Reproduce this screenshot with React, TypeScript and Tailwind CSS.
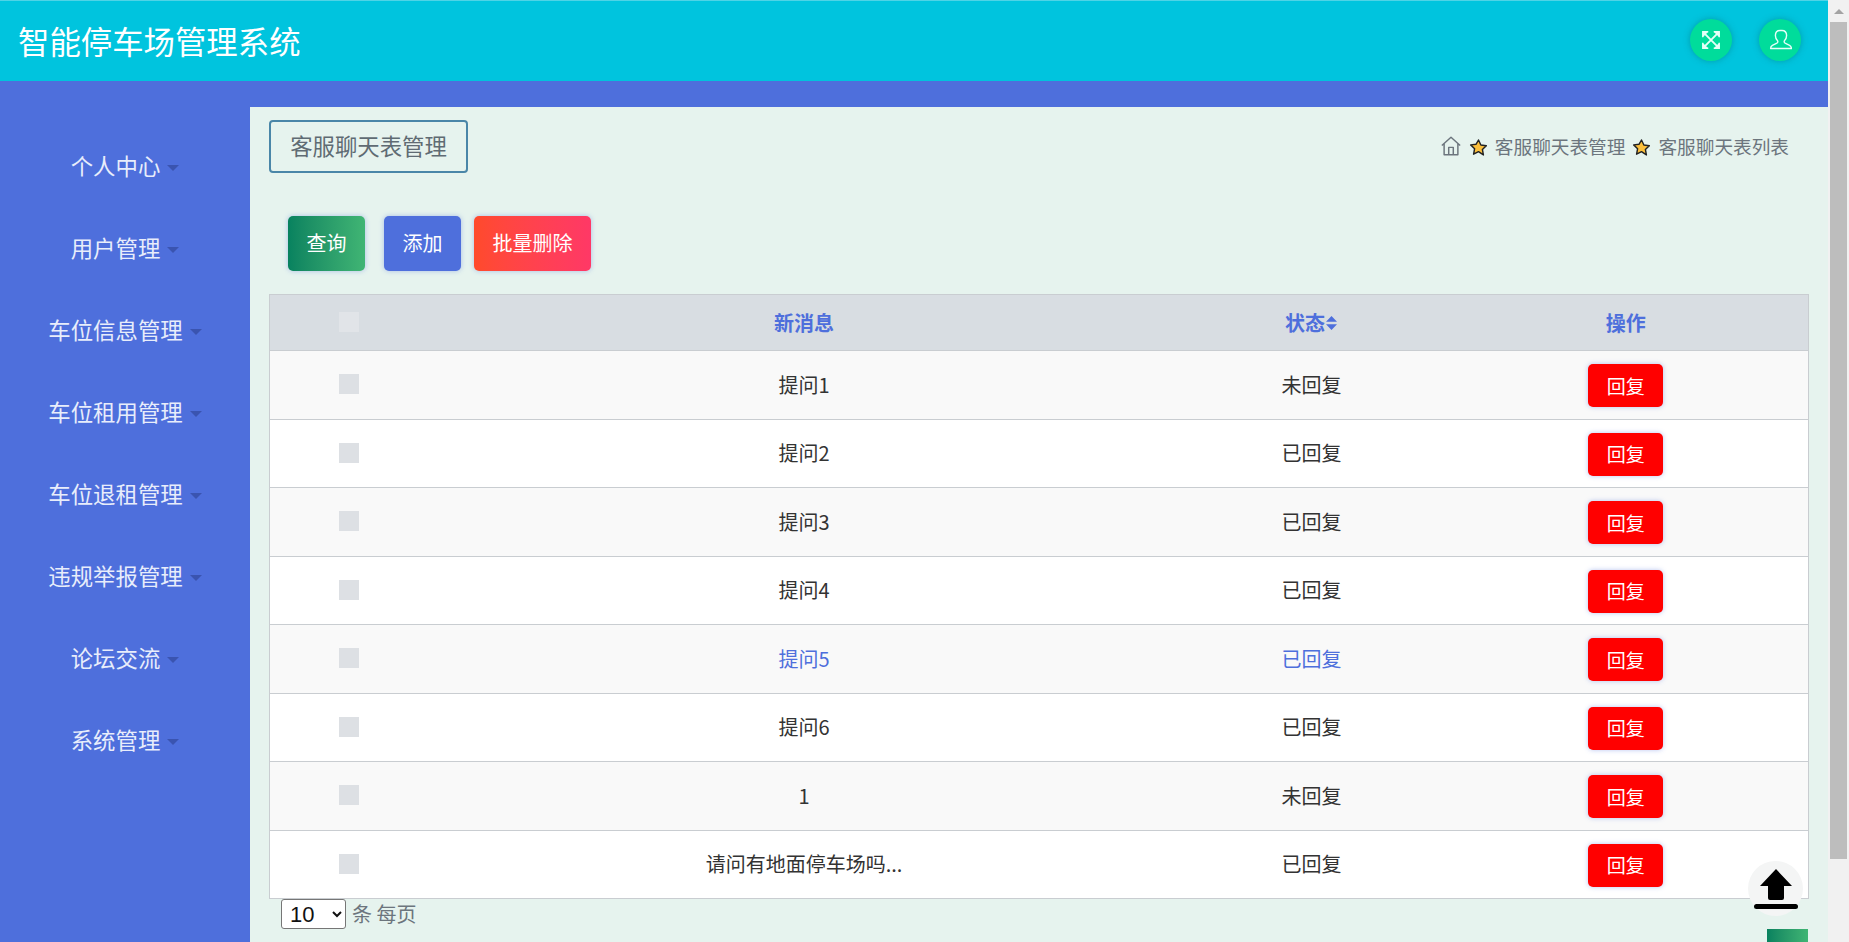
import React from 'react';

const FONT = '"Noto Sans CJK SC", "Liberation Sans", sans-serif';

const MENUS = ['个人中心', '用户管理', '车位信息管理', '车位租用管理', '车位退租管理', '违规举报管理', '论坛交流', '系统管理'];

const ROWS = [
  { id: 1, msg: '提问1', status: '未回复' },
  { id: 2, msg: '提问2', status: '已回复' },
  { id: 3, msg: '提问3', status: '已回复' },
  { id: 4, msg: '提问4', status: '已回复' },
  { id: 5, msg: '提问5', status: '已回复', hover: true },
  { id: 6, msg: '提问6', status: '已回复' },
  { id: 7, msg: '1', status: '未回复' },
  { id: 8, msg: '请问有地面停车场吗...', status: '已回复' },
];

const Star = () => (
  <svg width="19" height="19" viewBox="0 0 24 24" className="shrink-0 mt-[3px]">
    <path d="M12 2.500l3 6.300 6.900.9-5 4.800 1.300 6.900L12 17.200l-6.200 3.200 1.300-6.900-5-4.800 6.900-.9z" fill="#fbbf3c" stroke="#222" strokeWidth="1.800" strokeLinejoin="round" />
  </svg>
);

const Checkbox = ({ light }: { light?: boolean }) => (
  <div className={`w-5 h-5 mx-auto ${light ? 'bg-[#e1e4e8] -mt-0.5' : 'bg-[#dde0e4] -mt-px'}`}></div>
);

const App: React.FC = () => {
  return (
    <div className="flex h-[942px] overflow-hidden" style={{ fontFamily: FONT }}>
      <div className="relative w-[1828px] h-full flex flex-col bg-[#4e6fdc] overflow-hidden">
        {/* top bar */}
        <header className="h-[81px] shrink-0 flex items-center justify-between bg-[#00c4de] border-t border-[#4fd3e6] pl-[18px] pr-[27px]">
          <h1 className="text-[31.4px] leading-none text-white">智能停车场管理系统</h1>
          <div className="flex items-center gap-[27px] -mt-[2px]">
            <div className="w-[42px] h-[42px] rounded-full bg-[#00dc9b] shadow-[0_0_6px_rgba(0,120,120,0.5)] flex items-center justify-center">
              <svg width="22" height="22" viewBox="0 0 24 24" fill="none" stroke="#e6fff8" strokeWidth="2">
                <path d="M4 4l16 16M20 4L4 20" />
                <path d="M3 9V3h6M15 3h6v6M21 15v6h-6M9 21H3v-6" fill="#e6fff8" strokeWidth="1.500" />
              </svg>
            </div>
            <div className="w-[42px] h-[42px] rounded-full bg-[#00dc9b] shadow-[0_0_6px_rgba(0,120,120,0.5)] flex items-center justify-center">
              <svg width="24" height="24" viewBox="0 0 24 24" fill="none" stroke="#e6fff8" strokeWidth="1.400" strokeLinejoin="round">
                <path d="M12 2.500c-3 0-4.600 2.200-4.600 5 0 2.200.9 4 2.200 5.200.4.9.2 1.900-.7 2.400l-4.500 2.200c-1.300.7-1.800 1.700-1.800 3.200h20.800c0-1.500-.5-2.500-1.800-3.200l-4.500-2.200c-.9-.5-1.100-1.500-.7-2.400 1.300-1.200 2.200-3 2.200-5.200 0-2.800-1.600-5-4.600-5z" />
              </svg>
            </div>
          </div>
        </header>

        <div className="flex-1 flex pt-[26px] min-h-0">
          {/* sidebar */}
          <aside className="w-[250px] shrink-0 -mt-[26px] pt-[44px] flex flex-col">
            {MENUS.map((m) => (
              <div key={m} className="h-[82px] flex items-center justify-center text-[22.4px] text-[#e8edfb]">
                <span className="mr-[2px]">{m}</span>
                <span className="mt-1 ml-[5px] w-0 h-0 border-x-[6px] border-x-transparent border-t-[6px] border-t-[#3a54b0]"></span>
              </div>
            ))}
          </aside>

          {/* content */}
          <main className="flex-1 min-w-0 bg-[#e6f3ee] pl-[19px] pr-[19px] pt-[13px]">
            <div className="flex items-center justify-between pr-[1px]">
              <div className="h-[53px] w-[199px] pb-[1px] flex items-center justify-center rounded-[4px] border-2 border-[#4a86a8] text-[22.4px] text-[#5f6b73]">
                客服聊天表管理
              </div>
              <div className="flex items-center gap-[7px] pr-[19px] pb-[1px] text-[18.66px] text-[#6c757d]">
                <svg width="22" height="22" viewBox="0 0 24 24" fill="none" stroke="#6c757d" strokeWidth="1.600" strokeLinejoin="round">
                  <path d="M2 11.500L12 2.500l10 9M4.500 9.500V21.500h15V9.500" />
                  <path d="M9.500 21.500v-8h5v8" />
                </svg>
                <Star />
                <span>客服聊天表管理</span>
                <Star />
                <span>客服聊天表列表</span>
              </div>
            </div>

            <div className="flex items-center mt-[43px] ml-[19px] text-[20px] text-white">
              <button className="w-[77px] h-[55px] pb-[2px] rounded-[5px] bg-gradient-to-r from-[#07825f] to-[#40b574] shadow-[0_0_5px_rgba(78,111,220,0.4)]">查询</button>
              <button className="w-[77px] h-[55px] pb-[2px] ml-[19px] rounded-[5px] bg-[#4e6fdc] shadow-[0_0_5px_rgba(78,111,220,0.4)]">添加</button>
              <button className="w-[117px] h-[55px] pb-[2px] ml-[13px] rounded-[5px] bg-gradient-to-r from-[#ff4a2b] to-[#ff3866] shadow-[0_0_5px_rgba(78,111,220,0.4)]">批量删除</button>
            </div>

            <table className="mt-[23px] w-[1540px] table-fixed border-collapse border border-[#c9cdd1] text-[20px] text-[#333] text-center">
              <colgroup>
                <col className="w-[159px]" />
                <col className="w-[751px]" />
                <col className="w-[264px]" />
                <col />
              </colgroup>
              <thead>
                <tr className="h-[56px] bg-[#d8dde2] font-bold text-[#4e6fdc]">
                  <th><Checkbox light /></th>
                  <th>新消息</th>
                  <th>
                    <span className="inline-flex items-center">
                      状态
                      <svg width="13" height="16" viewBox="0 0 12 16" fill="#4e6fdc">
                        <path d="M6 1l5.500 5.800H.5zM6 15L.5 9.200h11z" />
                      </svg>
                    </span>
                  </th>
                  <th>操作</th>
                </tr>
              </thead>
              <tbody>
                {ROWS.map((row) => (
                  <tr
                    key={row.id}
                    className={`h-[68.5px] border-t border-[#c9cdd1] ${row.id % 2 === 1 ? 'bg-[#f9f9f9]' : 'bg-white'} ${row.hover ? 'text-[#4e6fdc]' : ''}`}
                  >
                    <td><Checkbox /></td>
                    <td>{row.msg}</td>
                    <td>{row.status}</td>
                    <td className="pt-[2px]">
                      <button className="w-[75px] h-[43px] rounded-[5px] bg-[#ff0000] text-[19px] text-white align-middle shadow-[0_0_5px_rgba(78,111,220,0.4)]">回复</button>
                    </td>
                  </tr>
                ))}
              </tbody>
            </table>

            <div className="flex items-center ml-[12px] text-[20px] text-[#6c757d]">
              <select className="w-[65px] h-[30px] rounded-[3px] border border-[#767676] bg-white text-[#111] text-[22px] font-['Liberation_Sans'] pl-1 leading-none" defaultValue="10">
                <option value="10">10</option>
              </select>
              <span className="ml-[6px]">条 每页</span>
            </div>
          </main>
        </div>

        {/* back to top */}
        <div className="absolute left-[1748px] top-[861px] w-[55px] h-[55px] rounded-full bg-[#f4f5f5] flex items-center justify-center">
          <svg width="44" height="40" viewBox="0 0 44 40" fill="#000" className="mt-[1px]">
            <path d="M22 0L38 17H30V29a2 2 0 0 1-2 2H16a2 2 0 0 1-2-2V17H6z" />
            <rect x="0" y="35" width="44" height="5" rx="2.500" />
          </svg>
        </div>
        {/* cut-off button at the bottom edge */}
        <div className="absolute left-[1767px] top-[929px] w-[41px] h-[13px] bg-gradient-to-r from-[#07825f] to-[#40b574]"></div>
      </div>

      {/* window scrollbar */}
      <div className="w-[21px] h-full shrink-0 bg-[#f1f1f1] flex flex-col items-center">
        <div className="h-[22px] flex items-center">
          <div className="w-0 h-0 border-x-[5px] border-x-transparent border-b-[5px] border-b-[#a3a3a3]"></div>
        </div>
        <div className="w-[17px] h-[837px] bg-[#bdbdbd]"></div>
      </div>
    </div>
  );
};

export default App;
